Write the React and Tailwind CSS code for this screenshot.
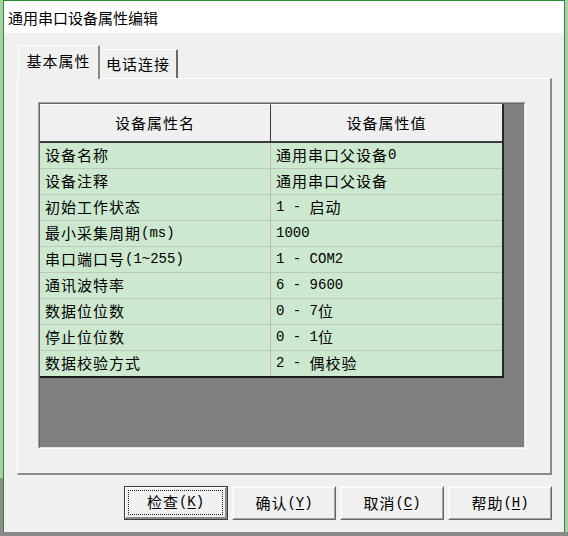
import React from "react";

const rows = [
  ["设备名称", "通用串口父设备0"],
  ["设备注释", "通用串口父设备"],
  ["初始工作状态", "1 - 启动"],
  ["最小采集周期(ms)", "1000"],
  ["串口端口号(1~255)", "1 - COM2"],
  ["通讯波特率", "6 - 9600"],
  ["数据位位数", "0 - 7位"],
  ["停止位位数", "0 - 1位"],
  ["数据校验方式", "2 - 偶校验"],
];

function T({ s }) {
  const parts = s.split(/([\x00-\x7f]+)/).filter(Boolean);
  return parts.map((p, i) =>
    /^[\x00-\x7f]+$/.test(p) ? (
      <span
        key={i}
        className="[font-family:'Liberation_Mono',monospace] text-[14px] tracking-normal whitespace-pre"
      >
        {p}
      </span>
    ) : (
      <span key={i}>{p}</span>
    )
  );
}

function Mono({ children }) {
  return (
    <span className="[font-family:'Liberation_Mono',monospace] text-[14px] tracking-normal whitespace-pre">
      {children}
    </span>
  );
}

function Btn({ label, k, def }) {
  if (def) {
    return (
      <div className="w-[104px] h-[34px] border border-[#3c3c3c] bg-[#f0f0f0] flex">
        <div className="flex-1 flex border-t border-l border-t-white border-l-white border-r-2 border-b-2 border-r-[#8a8a8a] border-b-[#8a8a8a] p-[2px]">
          <div className="flex-1 flex items-center justify-center border border-dotted border-[#202020] text-black">
            <T s={label} />
            <Mono>
              (<span className="underline underline-offset-2">{k}</span>)
            </Mono>
          </div>
        </div>
      </div>
    );
  }
  return (
    <div className="w-[104px] h-[34px] flex border-t border-l border-t-[#f8f8f8] border-l-[#f8f8f8] border-r border-b border-r-[#696969] border-b-[#696969] bg-[#f0f0f0]">
      <div className="flex-1 flex items-center justify-center border-t border-l border-t-white border-l-white border-r border-b border-r-[#a0a0a0] border-b-[#a0a0a0] text-black">
        <T s={label} />
        <Mono>
          (<span className="underline underline-offset-2">{k}</span>)
        </Mono>
      </div>
    </div>
  );
}

export default function App() {
  return (
    <div className="w-[568px] h-[536px] flex flex-col bg-[#8a8a8a] overflow-hidden [font-family:'Noto_Sans_CJK_SC',sans-serif]">
      <div className="flex h-[532px]">
        <div className="w-[3px] h-full flex flex-col">
          <div className="h-[478px] bg-[#a9cfa9]" />
          <div className="flex-1 bg-[#8c8c8c]" />
        </div>
        <div className="w-[562px] h-full border-t border-x border-[#2b8a2b] bg-[#f0f0f0] flex flex-col">
          {/* title bar */}
          <div className="h-[32px] bg-white flex items-center pl-[4px] text-[15px] text-black leading-none">
            通用串口设备属性编辑
          </div>
          {/* body */}
          <div className="flex flex-col pl-[13px] pt-[12px] text-[15px] tracking-[1px] text-black">
            {/* tabs */}
            <div className="flex items-end h-[33px] pl-[1px]">
              <div className="relative z-10 -mb-px w-[82px] h-[34px] bg-[#f0f0f0] border-t border-l border-t-white border-l-white border-r-2 border-r-[#8a8a8a] flex items-center justify-center pb-[2px]">
                基本属性
              </div>
              <div className="w-[78px] h-[29px] bg-[#f0f0f0] border-t border-t-white border-r-2 border-r-[#6a6a6a] rounded-tr-[2px] flex items-center justify-center">
                电话连接
              </div>
            </div>
            {/* panel */}
            <div className="w-[535px] h-[397px] border-t border-l border-t-white border-l-white border-r-2 border-b-2 border-r-[#8a8a8a] border-b-[#8a8a8a] pl-[20px] pt-[23px]">
              {/* grid */}
              <div className="w-[488px] h-[347px] border-t border-l border-t-[#a0a0a0] border-l-[#a0a0a0] border-r border-b border-r-white border-b-white">
                <div className="w-full h-full bg-[#808080] border-t border-l border-t-[#696969] border-l-[#696969] border-r border-b border-r-[#e3e3e3] border-b-[#e3e3e3]">
                  <div className="w-[464px] flex flex-col border-r-2 border-r-[#262626] border-b-2 border-b-[#1a1a1a]">
                    {/* header */}
                    <div className="flex h-[39px] bg-[#f0f0f0] border-b-2 border-b-[#3a3a3a]">
                      <div className="w-[231px] flex items-center justify-center border-r border-r-[#3a3a3a] border-t border-t-white">
                        设备属性名
                      </div>
                      <div className="flex-1 flex items-center justify-center border-t border-t-white">
                        设备属性值
                      </div>
                    </div>
                    {rows.map(([a, b], i) => (
                      <div
                        key={i}
                        className={
                          i === rows.length - 1
                            ? "flex h-[25px] bg-[#cce8cf]"
                            : "flex h-[26px] bg-[#cce8cf] border-b border-b-[#bfc7bf]"
                        }
                      >
                        <div className="w-[231px] flex items-center pl-[5px] border-r border-r-[#b4bcb4] whitespace-nowrap">
                          <T s={a} />
                        </div>
                        <div className="flex-1 flex items-center pl-[5px] whitespace-nowrap">
                          <T s={b} />
                        </div>
                      </div>
                    ))}
                  </div>
                </div>
              </div>
            </div>
            {/* buttons */}
            <div className="w-[535px] flex justify-end gap-[4px] mt-[11px]">
              <Btn label="检查" k="K" def />
              <Btn label="确认" k="Y" />
              <Btn label="取消" k="C" />
              <Btn label="帮助" k="H" />
            </div>
          </div>
        </div>
        <div className="w-[3px] h-full bg-[#a9cfa9]" />
      </div>
    </div>
  );
}
